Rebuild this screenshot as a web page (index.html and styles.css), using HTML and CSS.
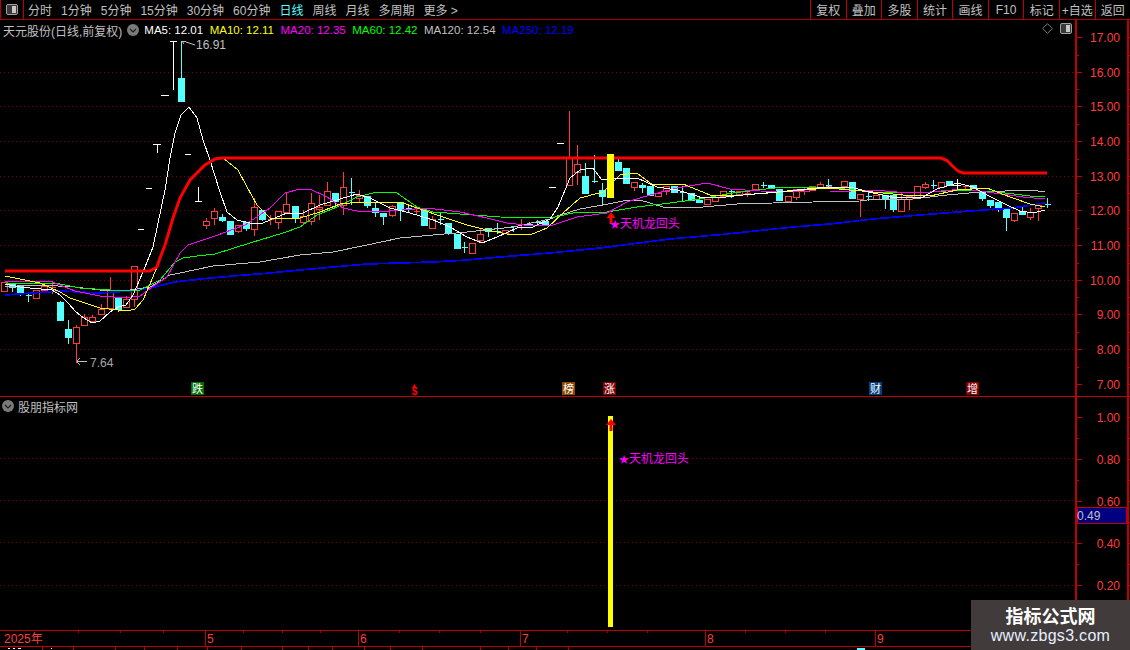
FILE: index.html
```html
<!DOCTYPE html>
<html lang="zh-CN">
<head>
<meta charset="utf-8">
<title>天元股份 日线</title>
<link rel="stylesheet" href="styles.css">
</head>
<body>
<div class="app">
  <header class="toolbar">
    <div class="toggle-cell"><svg class="box-icon" viewBox="0 0 12 11"><rect x=".5" y=".5" width="11" height="10" rx="1.5" class="box-frame"/><rect x="6" y="2" width="4" height="7" class="box-fill"/></svg></div>
    <nav class="periods">
      <span>分时</span><span>1分钟</span><span>5分钟</span><span>15分钟</span><span>30分钟</span><span>60分钟</span><span class="active">日线</span><span>周线</span><span>月线</span><span>多周期</span><span>更多 &gt;</span>
    </nav>
    <nav class="actions">
      <span>复权</span><span>叠加</span><span>多股</span><span>统计</span><span>画线</span><span>F10</span><span>标记</span><span>+自选</span><span>返回</span>
    </nav>
  </header>

  <section class="pane pane-price">
    <svg class="plot plot-price" viewBox="0 20 1075 376">
      <g class="grid">
        <path d="M0 72.5H1075M0 106.5H1075M0 141.5H1075M0 176.5H1075M0 210.5H1075M0 245.5H1075M0 280.5H1075M0 314.5H1075M0 349.5H1075"/>
      </g>
      <path class="candle-red" d="M1.5 282.5h6V291.5h-6zM33.5 290.5h6V298.5h-6zM41.5 286.5h6V290.5h-6zM44.5 283V286M49.5 287.5h6M52.5 284V294M73.5 327.5h6V343.5h-6zM76.5 343.5V363M76.5 325V327M81.5 317.5h6V325.5h-6zM84.5 314V317M89.5 317.5h6V321.5h-6zM92.5 315V317M98.5 309.5h6V314.5h-6zM101.5 304V309M107.5 290.5h6V308.5h-6zM110.5 277V290M123.5 299.5h6V307.5h-6zM126.5 296V299M131.5 266.5h6V299.5h-6zM134.5 299.5V307M203.5 221.5h6V225.5h-6zM206.5 218V221M206.5 225V229M211.5 211.5h6V218.5h-6zM214.5 208V211M214.5 218V225M235.5 225.5h6V231.5h-6zM238.5 231V233M251.5 207.5h6V229.5h-6zM254.5 198V207M254.5 229V236M267.5 219.5h6M270.5 215V225M275.5 211.5h6V222.5h-6zM278.5 222V229M283.5 204.5h6V212.5h-6zM286.5 192V204M300.5 216.5h6V222.5h-6zM303.5 210V216M303.5 222V225M308.5 203.5h6V221.5h-6zM311.5 193V203M311.5 221V225M316.5 207.5h6V209.5h-6zM319.5 195V207M319.5 209V220M324.5 191.5h6V205.5h-6zM327.5 182V191M340.5 187.5h6V205.5h-6zM343.5 172V187M343.5 205V215M356.5 195.5h6V198.5h-6zM359.5 190V195M359.5 198V203M389.5 206.5h6V215.5h-6zM392.5 205V206M392.5 215V217M413.5 211.5h6M416.5 207V215M429.5 219.5h6V228.5h-6zM432.5 216V219M469.5 243.5h6V253.5h-6zM477.5 234.5h6V240.5h-6zM480.5 229V234M480.5 240V242M502.5 230.5h6V233.5h-6zM518.5 224.5h6M521.5 219V230M566.5 158.5h6V185.5h-6zM569.5 111V158M574.5 164.5h6V172.5h-6zM577.5 145V164M577.5 172V185M631.5 182.5h6V187.5h-6zM634.5 187V191M655.5 193.5h6V196.5h-6zM663.5 186.5h6V191.5h-6zM666.5 191V195M704.5 199.5h6V204.5h-6zM712.5 197.5h6V201.5h-6zM720.5 191.5h6V196.5h-6zM736.5 191.5h6V194.5h-6zM744.5 193.5h6M747.5 190V197M752.5 184.5h6V189.5h-6zM785.5 196.5h6V201.5h-6zM793.5 189.5h6V197.5h-6zM796.5 197V200M801.5 191.5h6M804.5 188V195M809.5 186.5h6V190.5h-6zM817.5 184.5h6V187.5h-6zM820.5 182V184M820.5 187V189M825.5 186.5h6M841.5 181.5h6V186.5h-6zM857.5 194.5h6V199.5h-6zM860.5 199V217M873.5 195.5h6V199.5h-6zM898.5 199.5h6V211.5h-6zM901.5 192V199M906.5 196.5h6V199.5h-6zM909.5 199V210M914.5 186.5h6V197.5h-6zM922.5 184.5h6V187.5h-6zM925.5 182V184M925.5 187V189M938.5 182.5h6V187.5h-6zM962.5 186.5h6M965.5 186V190M1011.5 213.5h6V220.5h-6zM1014.5 220V222M1027.5 212.5h6V217.5h-6zM1030.5 208V212M1030.5 217V220M1035.5 205.5h6V208.5h-6zM1038.5 208V221"/>
      <path class="candle-cyan" d="M9.5 283.5h6V287.5h-6zM12.5 287V292M17.5 285.5h6V292.5h-6zM20.5 292V296M25.5 295.5h6M28.5 292V302M57.5 302.5h6V320.5h-6zM60.5 301V302M65.5 329.5h6V337.5h-6zM68.5 320V329M68.5 337V344M115.5 297.5h6V309.5h-6zM118.5 309V312M178.5 78.5h6V101.5h-6zM181.5 41V78M219.5 217.5h6V220.5h-6zM222.5 214V217M222.5 220V222M227.5 221.5h6V234.5h-6zM243.5 222.5h6V228.5h-6zM246.5 228V231M259.5 210.5h6V219.5h-6zM262.5 219V221M292.5 206.5h6V217.5h-6zM295.5 217V223M332.5 193.5h6V201.5h-6zM335.5 201V207M348.5 192.5h6M351.5 178V205M364.5 196.5h6V205.5h-6zM367.5 205V208M372.5 208.5h6V212.5h-6zM375.5 202V208M375.5 212V217M380.5 213.5h6V216.5h-6zM383.5 216V225M397.5 202.5h6V210.5h-6zM400.5 210V221M405.5 208.5h6M408.5 205V213M421.5 210.5h6V225.5h-6zM437.5 219.5h6M440.5 212V225M445.5 223.5h6V233.5h-6zM448.5 233V235M454.5 234.5h6V248.5h-6zM461.5 247.5h6M464.5 242V253M485.5 228.5h6V231.5h-6zM488.5 231V237M494.5 231.5h6M497.5 223V234M510.5 226.5h6M513.5 226V232M526.5 224.5h6M529.5 222V226M534.5 222.5h6M537.5 220V226M542.5 221.5h6V225.5h-6zM582.5 176.5h6V193.5h-6zM585.5 163V176M591.5 181.5h6M594.5 155V183M599.5 190.5h6V196.5h-6zM602.5 183V190M602.5 196V205M615.5 162.5h6V170.5h-6zM618.5 159V162M623.5 168.5h6V183.5h-6zM639.5 185.5h6V187.5h-6zM642.5 183V185M642.5 187V193M647.5 186.5h6V195.5h-6zM671.5 186.5h6V192.5h-6zM679.5 192.5h6M682.5 186V202M688.5 193.5h6V200.5h-6zM696.5 200.5h6V202.5h-6zM699.5 197V200M728.5 191.5h6M731.5 190V198M760.5 185.5h6M763.5 182V188M768.5 185.5h6V188.5h-6zM776.5 189.5h6V200.5h-6zM825.5 185.5h6M828.5 179V188M849.5 182.5h6V198.5h-6zM865.5 196.5h6M868.5 191V201M882.5 195.5h6V199.5h-6zM885.5 199V209M890.5 195.5h6V209.5h-6zM893.5 209V212M930.5 185.5h6M933.5 180V189M946.5 181.5h6V185.5h-6zM970.5 185.5h6V188.5h-6zM979.5 191.5h6V198.5h-6zM982.5 198V201M987.5 200.5h6V205.5h-6zM990.5 205V208M995.5 202.5h6V208.5h-6zM998.5 208V212M1003.5 209.5h6V217.5h-6zM1006.5 217V231M1019.5 211.5h6V214.5h-6zM1022.5 206V211M1044.5 204.5h6M1047.5 198V208"/>
      <path class="doji-white" d="M161 95.5h8M173.5 41V90M170 41.5h7M138 229.5h6M146 188.5h6M153 144.5h8M157.5 144V153M185 154.5h6M195 201.5h7M198.5 187V201M549 187.5h7M557 143.5h7M953 185.5h8M957.5 179V189"/>

      <polyline class="ma ma250" points="5,295 60,291 100,293 130,291 150,288 175,282 200,279 233,276 270,273 300,270 333,267 367,264 433,262 467,260 500,257 550,253 600,248 670,239 727,234 793,227 830,224 873,219 920,215 970,211 1013,208 1045,203"/>
      <polyline class="ma ma120" points="5,287 40,285 75,287 100,290 130,290 150,287 170,275 180,273 213,266 260,262 300,255 333,252 367,245 400,238 433,235 467,232 513,227 550,219 560,215 580,209 603,205 623,201 640,200 663,207 703,207 737,204 773,203 813,202 860,201 867,200 913,199 947,195 980,192 1030,190 1045,192"/>
      <polyline class="ma ma60" points="5,283 60,284 80,288 110,290 140,290 160,280 175,262 183,258 197,256 215,254 250,243 283,233 300,227 317,215 337,207 357,197 377,192 397,193 417,207 433,212 460,214 500,217 550,218 573,213 607,212 637,207 670,203 700,199 733,193 783,187 827,187 880,193 930,192 963,190 997,192 1030,196 1045,196"/>
      <polyline class="ma ma20" points="5,281 50,281 60,285 75,291 100,296 125,298 140,296 155,285 167,277 180,253 188,245 215,236 245,225 270,208 285,193 300,189 310,189 327,197 343,208 357,211 390,211 427,208 460,212 487,218 507,223 533,226 553,225 577,217 607,213 627,202 650,195 677,188 707,183 730,189 760,191 810,192 830,192 873,190 897,192 930,192 963,189 987,192 1023,197 1045,199"/>
      <polyline class="ma ma10" points="5,276 20,279 40,283 60,292 70,298 85,303 100,308 118,310 127,311 135,309 143,300 150,284 157,267 160,258 165,245 173,218 180,198 190,180 205,165 215,159 223,158 238,170 247,187 257,205 270,218 300,218 320,212 340,204 360,202 400,202 420,209 443,217 467,225 487,230 507,234 530,235 547,228 563,213 580,198 603,192 620,175 637,173 653,185 683,184 710,195 743,195 793,191 827,188 873,192 903,195 930,196 957,190 987,188 1010,197 1030,204 1045,207"/>
      <polyline class="ma ma5" points="5,284 20,287 30,288 52,290 60,295 68,303 76,312 84,318 92,323 100,321 110,312 118,307 126,305 133,295 143,272 153,247 165,190 170,158 175,133 181,115 189,107 197,118 203,140 210,160 220,192 227,212 237,220 250,223 263,223 270,220 287,213 303,213 320,205 340,199 357,194 370,198 390,208 410,213 433,220 450,227 467,237 482,243 497,237 517,228 533,227 550,219 558,207 570,178 580,170 593,168 602,180 615,178 637,178 657,187 677,190 700,197 717,198 743,195 777,192 827,187 850,187 873,193 897,198 923,197 937,189 957,183 973,187 987,195 1007,205 1020,211 1033,213 1045,210"/>
      <polyline class="ma-thick" points="5,271 150,271 157,267 160,258 165,245 173,218 180,198 190,180 205,165 215,159 222,158 941,158 947,160.5 953,166.5 958,171 963,173 1047,173"/>

      <rect class="signal-bar" x="607" y="154" width="7" height="44"/>
      <path class="signal-arrow" d="M611 212l-4.500 6h3v6h3v-6h3z"/>
      <text class="signal-text" x="610" y="228"><tspan class="star">★</tspan>天机龙回头</text>

      <path class="peak-line" d="M182 41.500h4M182 41l2 3M186 42l9 3M77 361.500h10M77 361l3-3M77 362l3 3"/>
      <text class="peak-text" x="196" y="49">16.91</text>
      <text class="peak-text dim" x="90" y="367">7.64</text>

      <rect class="tag-green" x="191" y="382" width="13" height="13"/><text class="tag-text" x="197.500" y="393">跌</text>
      <path class="signal-arrow" d="M414.500 384l-2.500 4h5z"/>
      <text class="tag-dollar" x="414.500" y="395">$</text>
      <rect class="tag-brown" x="562" y="382" width="13" height="13"/><text class="tag-text" x="568.500" y="393">榜</text>
      <rect class="tag-red" x="603" y="382" width="13" height="13"/><text class="tag-text" x="609.500" y="393">涨</text>
      <rect class="tag-blue" x="869" y="382" width="13" height="13"/><text class="tag-text" x="875.500" y="393">财</text>
      <rect class="tag-red" x="966" y="382" width="13" height="13"/><text class="tag-text" x="972.500" y="393">增</text>
    </svg>
    <svg class="plot-axis" viewBox="1075 20 55 376">
      <path class="axis-line" d="M1076 20V396M1127.500 20V396"/>
      <path class="axis-tick" d="M1076 37.500h6M1076 55h3M1076 72.500h6M1076 89.500h3M1076 106.500h6M1076 124h3M1076 141.500h6M1076 159h3M1076 176.500h6M1076 193.500h3M1076 210.500h6M1076 228h3M1076 245.500h6M1076 263h3M1076 280.500h6M1076 297.500h3M1076 314.500h6M1076 332h3M1076 349.500h6M1076 367h3M1076 384.500h6M1127 37.500h3M1127 55h3M1127 72.500h3M1127 89.500h3M1127 106.500h3M1127 124h3M1127 141.500h3M1127 159h3M1127 176.500h3M1127 193.500h3M1127 210.500h3M1127 228h3M1127 245.500h3M1127 263h3M1127 280.500h3M1127 297.500h3M1127 314.500h3M1127 332h3M1127 349.500h3M1127 367h3M1127 384.500h3"/>
      <g class="axis-labels">
        <text x="1120" y="42">17.00</text><text x="1120" y="77">16.00</text><text x="1120" y="111">15.00</text><text x="1120" y="146">14.00</text><text x="1120" y="181">13.00</text><text x="1120" y="215">12.00</text><text x="1120" y="250">11.00</text><text x="1120" y="285">10.00</text><text x="1120" y="319">9.00</text><text x="1120" y="354">8.00</text><text x="1120" y="389">7.00</text>
      </g>
    </svg>
    <div class="legend">
      <span class="legend-title">天元股份(日线,前复权)</span>
      <svg class="round-icon" viewBox="0 0 12 12"><circle cx="6" cy="6" r="6" class="round-bg"/><path d="M3 5l3 3 3-3" class="round-chev"/></svg>
      <span class="ma-label c-white">MA5: 12.01</span>
      <span class="ma-label c-yellow">MA10: 12.11</span>
      <span class="ma-label c-magenta">MA20: 12.35</span>
      <span class="ma-label c-green">MA60: 12.42</span>
      <span class="ma-label c-gray">MA120: 12.54</span>
      <span class="ma-label c-blue">MA250: 12.19</span>
    </div>
    <div class="corner-icons">
      <svg class="diamond-icon" viewBox="0 0 12 12"><path d="M6 .7L11.300 6 6 11.300 .7 6z" class="diamond"/></svg>
      <svg class="box-icon" viewBox="0 0 12 11"><rect x=".5" y=".5" width="11" height="10" rx="1.500" class="box-frame"/><rect x="6" y="2" width="4" height="7" class="box-fill"/></svg>
    </div>
  </section>

  <section class="pane pane-sub">
    <svg class="plot plot-sub" viewBox="0 397 1075 233">
      <path class="grid-path" d="M0 458.500H1075M0 500.500H1075M0 542.500H1075M0 585.500H1075"/>
      <rect class="mask" x="616" y="450" width="74" height="16"/>
      <rect class="signal-bar" x="608" y="416" width="5" height="211"/>
      <path class="signal-arrow" d="M611 419l-5 6h3.500v6h3v-6h3.500z"/>
      <text class="signal-text" x="619" y="463"><tspan class="star">★</tspan>天机龙回头</text>
    </svg>
    <svg class="plot-axis" viewBox="1075 397 55 233">
      <path class="axis-line" d="M1076 397V630M1127.500 397V630"/>
      <path class="axis-tick" d="M1076 417.500h6M1076 438h3M1076 459.500h6M1076 480h3M1076 501.500h6M1076 522h3M1076 543.500h6M1076 564h3M1076 585.500h6M1076 606h3M1127 417.500h3M1127 438h3M1127 459.500h3M1127 480h3M1127 501.500h3M1127 522h3M1127 543.500h3M1127 564h3M1127 585.500h3M1127 606h3"/>
      <g class="axis-labels">
        <text x="1120" y="422">1.00</text><text x="1120" y="464">0.80</text><text x="1120" y="506">0.60</text><text x="1120" y="548">0.40</text><text x="1120" y="590">0.20</text>
      </g>
      <rect class="value-box" x="1077.500" y="507.500" width="49" height="16"/>
      <text class="value-text" x="1077" y="520">0.49</text>
    </svg>
    <div class="sub-title">
      <svg class="round-icon" viewBox="0 0 12 12"><circle cx="6" cy="6" r="6" class="round-bg"/><path d="M3 5l3 3 3-3" class="round-chev"/></svg>
      <span>股朋指标网</span>
    </div>
  </section>

  <svg class="date-strip" viewBox="0 630 1130 16">
    <path class="axis-tick" d="M0 630.500H1130M78.500 631v2M120.500 631v2M163.500 631v2M243.500 631v2M282.500 631v2M320.500 631v2M399.500 631v2M439.500 631v2M480.500 631v2M567.500 631v2M607.500 631v2M647.500 631v2M745.500 631v2M785.500 631v2M825.500 631v2M205.500 631v15M358.500 631v15M520.500 631v15M705.500 631v15M875.500 631v15"/>
    <g class="date-labels">
      <text x="4" y="643">2025年</text><text x="207" y="643">5</text><text x="360" y="643">6</text><text x="522" y="643">7</text><text x="707" y="643">8</text><text x="877" y="643">9</text>
    </g>
  </svg>
  <svg class="status-strip" viewBox="0 646 1130 4">
    <path class="axis-tick" d="M0 646.500H1130M42.500 646v4M73.500 646v4M115.500 646v4M144.500 646v4M177.500 646v4M207.500 646v4M241.500 646v4M282.500 646v4M308.500 646v4M332.500 646v4M364.500 646v4M390.500 646v4M422.500 646v4M480.500 646v4M508.500 646v4M536.500 646v4M568.500 646v4"/>
    <path class="status-white" d="M8 648.500h2M13 648.500h2M18 648.500h3M51 648.500h1"/>
    <rect class="status-cyan" x="857" y="648" width="8" height="2"/>
  </svg>

  <aside class="watermark">
    <div class="wm-title">指标公式网</div>
    <div class="wm-url">www.zbgs3.com</div>
  </aside>
</div>
</body>
</html>
```

FILE: styles.css
```css
* { box-sizing: border-box; }
html, body { margin: 0; padding: 0; background: #000; }
body { font-family: "Liberation Sans", "Noto Sans CJK SC", sans-serif; font-size: 12px; color: #c0c0c0; }
svg { display: block; }
text { font-family: "Liberation Sans", "Noto Sans CJK SC", sans-serif; font-size: 12px; }

.app { position: relative; width: 1130px; height: 650px; overflow: hidden; background: #000; }

/* toolbar */
.toolbar { display: flex; align-items: stretch; height: 20px; border-bottom: 1px solid #b00000; }
.toggle-cell { width: 24px; display: flex; align-items: center; justify-content: center; border-right: 1px solid #c00000; border-left: 1px solid #c00000; }
.box-icon { width: 12px; height: 11px; }
.box-frame { fill: #3a3a3a; stroke: #a0a0a0; }
.box-fill { fill: #c8c8c8; }
.periods { display: flex; align-items: center; gap: 9px; padding-left: 4px; flex: 1; white-space: nowrap; }
.periods .active { color: #54ffff; }
.actions { display: flex; width: 320px; }
.actions span { flex: 1; display: flex; align-items: center; justify-content: center; border-left: 1px solid #c00000; white-space: nowrap; }

/* panes */
.pane { position: relative; display: flex; }
.pane-price { height: 377px; border-bottom: 1px solid #c00000; }
.pane-sub { height: 233px; }
.plot { width: 1075px; flex: none; }
.plot-price { height: 376px; }
.plot-sub { height: 233px; }
.plot-axis { width: 55px; flex: none; }
.pane-price .plot-axis { height: 376px; }
.pane-sub .plot-axis { height: 233px; }

.grid path, .grid-path { fill: none; stroke: #800000; stroke-dasharray: 1 3; shape-rendering: crispEdges; }
.candle-red { fill: none; stroke: #ff3c3c; shape-rendering: crispEdges; }
.candle-cyan { fill: #54ffff; stroke: #54ffff; shape-rendering: crispEdges; }
.doji-white { fill: none; stroke: #fff; shape-rendering: crispEdges; }
.ma { fill: none; stroke-width: 1; shape-rendering: crispEdges; }
.ma5 { stroke: #fff; }
.ma10 { stroke: #ff0; }
.ma20 { stroke: #f0f; }
.ma60 { stroke: #0f0; }
.ma120 { stroke: #c0c0c0; }
.ma250 { stroke: #0000ff; stroke-width: 1.7; }
.ma-thick { fill: none; stroke: #f00; stroke-width: 3; }
.signal-bar { fill: #ff0; }
.signal-arrow { fill: #f00; }
.signal-text { fill: #f0f; }
.star { font-size: 10px; }
.mask { fill: #000; }
.peak-line { fill: none; stroke: #c0c0c0; }
.peak-text { fill: #c0c0c0; }
.dim { fill: #a8a8a8; }
.tag-green { fill: #007000; }
.tag-brown { fill: #8b4a00; }
.tag-red { fill: #800000; }
.tag-blue { fill: #004080; }
.tag-text { fill: #fff; text-anchor: middle; font-size: 11px; }
.tag-dollar { fill: #f00; text-anchor: middle; font-size: 10px; font-weight: 700; }

/* axes */
.axis-line { fill: none; stroke: #c00000; stroke-width: 2; shape-rendering: crispEdges; }
.axis-tick { fill: none; stroke: #c00000; shape-rendering: crispEdges; }
.axis-labels text { fill: #ff3c3c; text-anchor: end; }
.value-box { fill: #000080; stroke: #c00000; shape-rendering: crispEdges; }
.value-text { fill: #c0c0c0; }

/* legends */
.legend { position: absolute; left: 3px; top: 2px; display: flex; align-items: center; gap: 5px; white-space: nowrap; height: 16px; }
.legend-title { color: #c0c0c0; }
.round-icon { width: 12px; height: 12px; flex: none; }
.round-bg { fill: #7a7a7a; }
.round-chev { fill: none; stroke: #1e1e1e; stroke-width: 1.2; }
.ma-label { font-size: 11.5px; margin-right: 1.5px; }
.c-white { color: #fff; }
.c-yellow { color: #ff0; }
.c-magenta { color: #f0f; }
.c-green { color: #0f0; }
.c-gray { color: #c0c0c0; }
.c-blue { color: #0000ff; }
.corner-icons { position: absolute; left: 1042px; top: 3px; display: flex; align-items: center; gap: 7px; }
.diamond-icon { width: 11px; height: 11px; }
.diamond { fill: none; stroke: #8a8a8a; }
.sub-title { position: absolute; left: 2px; top: 2px; display: flex; align-items: center; gap: 4px; height: 14px; }

/* time strip */
.date-strip { width: 1130px; height: 16px; }
.date-labels text { fill: #ff3c3c; }
.status-strip { width: 1130px; height: 4px; }
.status-white { fill: none; stroke: #fff; }
.status-cyan { fill: #54ffff; }

/* watermark */
.watermark { position: absolute; left: 971px; top: 600px; width: 159px; height: 50px; background: #413b3b; display: flex; flex-direction: column; align-items: center; padding-top: 3px; }
.wm-title { color: #fff; font-size: 18px; font-weight: 700; line-height: 24px; font-family: "Noto Sans CJK SC", sans-serif; }
.wm-url { color: #e6f0ff; font-size: 16px; line-height: 18px; font-family: "Liberation Sans", sans-serif; letter-spacing: .3px; }
```
